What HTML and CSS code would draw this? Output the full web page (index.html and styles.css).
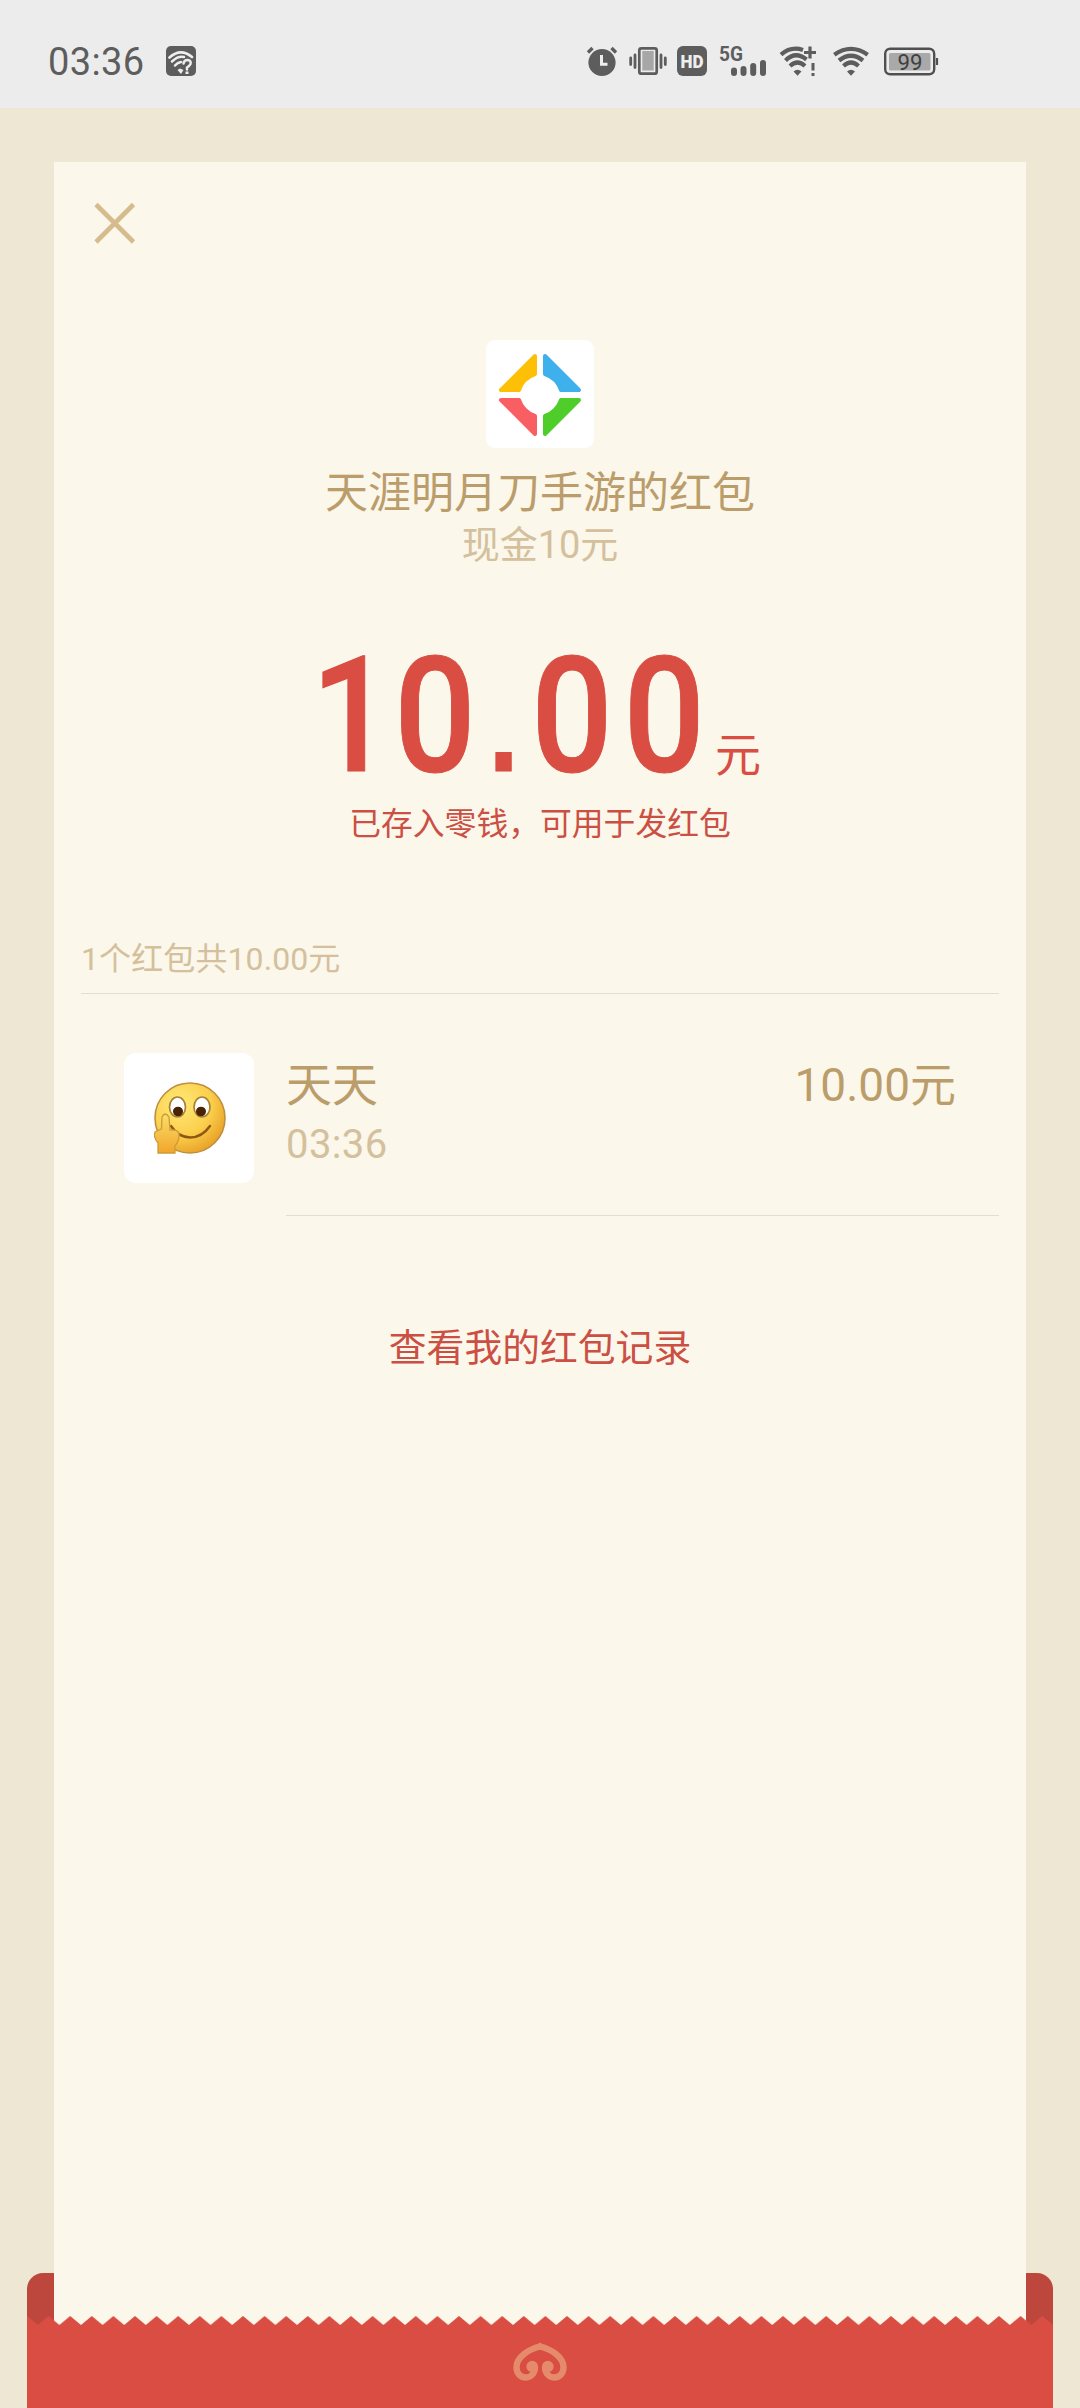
FILE: index.html
```html
<!DOCTYPE html>
<html lang="zh-CN">
<head>
<meta charset="utf-8">
<title>红包详情</title>
<link rel="stylesheet" href="styles.css">
</head>
<body>
<div class="screen">
  <header class="status">
    <span class="clock">03:36</span>
    <svg class="net-help" width="30" height="30" viewBox="0 0 30 30">
      <rect width="30" height="30" rx="5" fill="#5d5d5d"/>
      <g fill="none" stroke="#eee" stroke-linecap="round">
        <path d="M3.500 11.500Q14.500 1.500 26 11" stroke-width="2.700"/>
        <path d="M6 15.500Q12 9.500 18 11" stroke-width="2.500"/>
        <path d="M9 19.500Q11.500 16.500 15 16" stroke-width="2.500"/>
        <path d="M17.500 17.500Q18 14 21.500 14Q25.500 14.500 24.500 18Q23.500 20 21 21.500V23.500" stroke-width="2.500"/>
      </g>
      <path d="M11.500 24l2.500-1.500 3.500 1.500-2.500 4zM19.500 25.500h3v2.500h-3z" fill="#eee"/>
    </svg>
    <div class="status-icons">
      <svg width="32" height="32" viewBox="0 0 32 32">
        <circle cx="16" cy="17.500" r="13.600" fill="#5d5d5d"/>
        <path d="M2 7.500L6.500 3M30 7.500L25.500 3" stroke="#5d5d5d" stroke-width="3.400"/>
        <path d="M15.500 10V19.300H21.500" fill="none" stroke="#eee" stroke-width="3"/>
      </svg>
      <svg class="vibrate" width="38" height="32" viewBox="0 0 38 32">
        <rect x="10.300" y="3.300" width="17.400" height="25.400" rx="2" fill="#ececec" stroke="#5d5d5d" stroke-width="2.700"/>
        <rect x="13.300" y="6" width="11.400" height="19.500" fill="#a7a7a7"/>
        <path d="M6 10v12.500M32 10v12.500M1.700 13v6.500M36.300 13v6.500" stroke="#5d5d5d" stroke-width="2.800" stroke-linecap="round"/>
      </svg>
      <svg class="volte" width="30" height="32" viewBox="0 0 30 32">
        <rect y="1" width="30" height="30" rx="6" fill="#5d5d5d"/>
        <text class="hd" x="3.500" y="23" textLength="23" lengthAdjust="spacingAndGlyphs">HD</text>
      </svg>
      <svg class="signal" width="48" height="32" viewBox="0 0 48 32">
        <text class="gen" x="0" y="16" textLength="24" lengthAdjust="spacingAndGlyphs">5G</text>
        <path d="M15 25.500v2.500M24.500 24v4M34.200 21v7M44 18v10" stroke="#5d5d5d" stroke-width="6" stroke-linecap="round"/>
      </svg>
      <svg class="wifi-plus" width="38" height="32" viewBox="0 0 38 32">
        <g fill="none" stroke="#5d5d5d" stroke-width="4.200">
          <path d="M2 9.700Q12 1 24 5"/>
          <path d="M6.500 15.500Q16.500 5.500 27.500 14.500"/>
          <path d="M11 21Q18.500 14 26 21"/>
          <path d="M31 1.500v12M25 7.500h12" stroke-width="3.200"/>
          <path d="M34 18v7.500M34 28v3" stroke-width="3"/>
        </g>
        <path d="M14.500 26.500Q18.500 23 22.500 26.500L18.500 30.800z" fill="#5d5d5d"/>
      </svg>
      <svg class="wifi" width="36" height="32" viewBox="0 0 36 32">
        <g fill="none" stroke="#5d5d5d" stroke-width="4.200">
          <path d="M1.300 9.800Q18 -2 34.700 9.800"/>
          <path d="M6 15.500Q18 6 30 15.500"/>
          <path d="M10.500 21Q18 14 25.500 21"/>
        </g>
        <path d="M14 26.500Q18 23 22 26.500L18 30.800z" fill="#5d5d5d"/>
      </svg>
      <svg class="battery" width="55" height="32" viewBox="0 0 55 32">
        <rect x="1.200" y="3.700" width="49" height="25.600" rx="5" fill="none" stroke="#505050" stroke-width="2.400"/>
        <rect x="5" y="8" width="41.500" height="17.500" rx="1.500" fill="#a9a9a9"/>
        <path d="M53 13v7" stroke="#505050" stroke-width="2.200"/>
        <text class="charge" x="13.500" y="24.700" textLength="25" lengthAdjust="spacingAndGlyphs">99</text>
      </svg>
    </div>
  </header>

  <div class="envelope">
    <main class="card">
      <svg class="close" width="44" height="44" viewBox="0 0 44 44"><path d="M3 2.500L40.500 40M40.500 2.500L3 40" stroke="#d6bc8c" stroke-width="4.600"/></svg>
      <div class="logo">
        <svg width="84" height="84" viewBox="0 0 84 84">
          <g stroke-width="4" stroke-linejoin="round">
            <path d="M37 3L3 37H21Q25 25 37 21Z" fill="#fdc006" stroke="#fdc006"/>
            <path d="M47 3L81 37H63Q59 25 47 21Z" fill="#3eb0ec" stroke="#3eb0ec"/>
            <path d="M37 81L3 47H21Q25 59 37 63Z" fill="#f95f62" stroke="#f95f62"/>
            <path d="M47 81L81 47H63Q59 59 47 63Z" fill="#4ecd2b" stroke="#4ecd2b"/>
          </g>
          <circle cx="42" cy="42" r="17.500" fill="#fff"/>
        </svg>
      </div>
      <h1 class="title">天涯明月刀手游的红包</h1>
      <p class="subtitle">现金10元</p>
      <p class="amount">
        <svg class="figure" width="400" height="116" viewBox="0 0 400 116">
          <text class="number" transform="scale(.89 1)" y="116" x="48 141.600 218.500 295.600 399"><tspan>10</tspan><tspan class="point">.</tspan><tspan>00</tspan></text>
        </svg>
        <span class="unit">元</span>
      </p>
      <p class="note">已存入零钱，可用于发红包</p>
      <p class="summary">1个红包共10.00元</p>
      <section class="record">
        <div class="avatar">
          <svg width="74" height="74" viewBox="0 0 74 74">
            <defs>
              <radialGradient id="face" cx=".35" cy=".3" r=".75"><stop offset="0" stop-color="#ffe978"/><stop offset=".6" stop-color="#fbcf4c"/><stop offset="1" stop-color="#e9a126"/></radialGradient>
              <linearGradient id="hand" x2="0" y2="1"><stop offset="0" stop-color="#f9df6a"/><stop offset="1" stop-color="#f2a52b"/></linearGradient>
            </defs>
            <circle cx="38" cy="37" r="35" fill="url(#face)" stroke="#bd9040" stroke-width="1.600"/>
            <g fill="#fff" stroke="#a58235" stroke-width="1.700">
              <ellipse cx="25.500" cy="26" rx="8" ry="10"/><ellipse cx="50" cy="26" rx="8" ry="10"/>
            </g>
            <ellipse cx="26" cy="30.500" rx="5" ry="4.800" fill="#4a2204"/><ellipse cx="49" cy="30.500" rx="5" ry="4.800" fill="#4a2204"/>
            <path d="M19 45Q26 56 38 56.500Q50 56.500 58 45" fill="none" stroke="#8f5714" stroke-width="2.400" stroke-linecap="round"/>
            <path d="M6 72V62Q1 56 3 51Q7 49 9.500 48L10 36Q13 30 17 36L18 49Q28 48 27 55Q27 60 23 65V72Z" fill="url(#hand)" stroke="#cf9b36" stroke-width="1.300"/>
          </svg>
        </div>
        <div class="record-body">
          <div class="person">
            <span class="name">天天</span>
            <span class="time">03:36</span>
          </div>
          <span class="sum">10.00元</span>
        </div>
      </section>
      <a class="history">查看我的红包记录</a>
    </main>
    <footer class="pocket">
      <svg class="teeth" width="1026" height="92" viewBox="0 0 1026 92">
        <defs>
          <pattern id="tooth" width="21.600" height="92" patternUnits="userSpaceOnUse"><path d="M0 0L10.800 9L21.600 0V92H0Z" fill="#d94d42"/></pattern>
        </defs>
        <rect width="1026" height="92" fill="url(#tooth)"/>
        <rect y="9" width="1026" height="83" fill="#d94d42"/>
        <g fill="none" stroke="#e68a6c" stroke-width="6.400">
          <path d="M513 30.500C502 33 489.500 41 489.500 51C489.500 58 494 61.500 499 61.500C504 61.500 508 57 508 51"/>
          <path d="M513 30.500C524 33 536.500 41 536.500 51C536.500 58 532 61.500 527 61.500C522 61.500 518 57 518 51"/>
        </g>
        <path d="M508 30L513 26.500L518 30L513 33z" fill="#e68a6c"/>
        <circle cx="505.200" cy="50.500" r="5.800" fill="#e68a6c"/><circle cx="520.800" cy="50.500" r="5.800" fill="#e68a6c"/>
      </svg>
    </footer>
  </div>
</div>
</body>
</html>
```
FILE: styles.css
```css
* { box-sizing: border-box; }
body { margin: 0; font-family: Roboto, "Noto Sans CJK SC", sans-serif; }
h1, p { margin: 0; font-weight: 400; }
svg { display: block; flex: none; overflow: visible; }
.screen { display: flex; flex-direction: column; height: 2408px; background: #eee7d4; overflow: hidden; }

.status { display: flex; align-items: center; height: 108px; padding: 14px 141px 0 48px; background: #ececec; }
.clock { width: 118px; padding-top: 2px; font-size: 38px; letter-spacing: .4px; color: #5d5d5d; white-space: nowrap; }
.status-icons { display: flex; align-items: center; margin-left: auto; }
.vibrate { margin-left: 11px; }
.volte { margin-left: 10px; }
.signal, .wifi-plus { margin-left: 12px; }
.wifi { margin-left: 16px; }
.battery { margin-left: 15px; }
.hd { font: 900 19px Roboto, sans-serif; fill: #eee; }
.gen { font: 700 21px Roboto, sans-serif; fill: #5d5d5d; }
.charge { font: 400 22px Roboto, sans-serif; fill: #404040; }

.envelope { display: flex; flex-direction: column; flex: 1; padding: 54px 27px 0; }
.card { display: flex; flex-direction: column; align-items: center; flex: 1; margin: 0 27px -9px; padding: 40px 27px 0; background: #fbf7ea; position: relative; z-index: 1; }
.close { align-self: flex-start; margin-left: 12px; }
.logo { display: grid; place-items: center; width: 108px; height: 108px; margin-top: 94px; padding-top: 1px; border-radius: 9px; background: #fff; }
.title { margin-top: 17px; font-size: 43px; line-height: 56px; color: #bb9d6b; }
.subtitle { font-size: 38px; line-height: 48px; color: #d4c09c; }
.amount { display: flex; align-items: baseline; gap: 6px; height: 120px; margin-top: 86px; padding-right: 10px; color: #d94d42; }
.figure { margin-bottom: -2px; }
.number { font-size: 161px; font-weight: 500; text-anchor: middle; fill: #d94d42; stroke: #d94d42; stroke-width: 1px; }
.point { font-family: "DejaVu Sans", sans-serif; font-size: 98px; font-weight: 700; }
.unit { font-size: 46px; line-height: 60px; }
.note { margin-top: 27px; font-size: 31.8px; line-height: 44px; color: #cc4f43; }
.summary { align-self: stretch; height: 57px; margin-top: 91px; border-bottom: 1px solid #e3decf; font-size: 32px; line-height: 44px; letter-spacing: .1px; color: #d4c09c; }
.record { display: flex; align-self: stretch; align-items: flex-start; gap: 32px; padding: 59px 0 0 43px; }
.avatar { display: grid; place-items: center; width: 130px; height: 130px; border-radius: 12px; background: #fff; }
.record-body { display: flex; flex: 1; justify-content: space-between; height: 163px; padding: 4px 43px 0 0; border-bottom: 1px solid #e3decf; }
.person { display: flex; flex-direction: column; }
.name, .sum { font-size: 46px; line-height: 57px; color: #bb9d6b; }
.time { padding-top: 3px; font-size: 40px; line-height: 56px; letter-spacing: .4px; color: #d4c09c; }
.history { margin-top: 107px; font-size: 37.8px; line-height: 50px; color: #cc4f43; }

.pocket { display: flex; align-items: flex-end; height: 135px; margin-top: -126px; border-radius: 16px 16px 0 0; background: #be473d; }
.teeth { position: relative; z-index: 2; }
```
